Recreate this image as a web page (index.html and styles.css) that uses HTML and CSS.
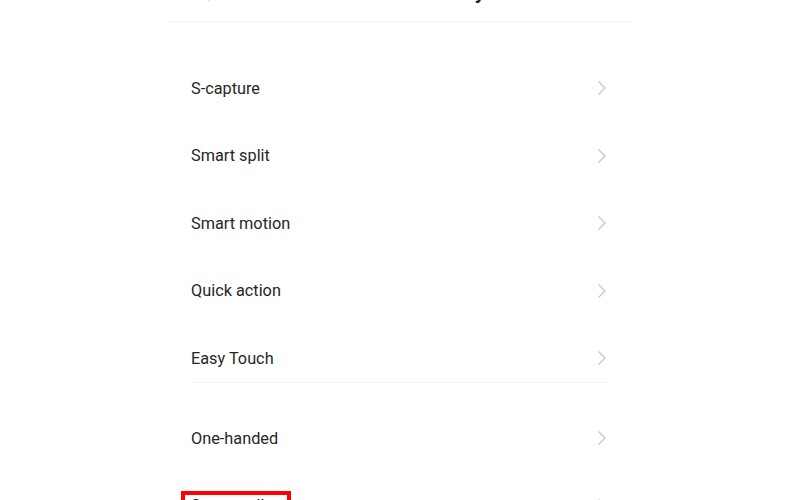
FILE: index.html
```html
<!DOCTYPE html>
<html lang="en">
<head>
    <meta charset="UTF-8">
    <meta name="viewport" content="width=device-width, initial-scale=1.0">
    <title>Shortcuts and accessibility</title>
    <link rel="stylesheet" href="styles.css">
</head>
<body>
    <div class="page">
        <header class="page-header">
            <h1 class="page-title">Quick and smart functionality</h1>
        </header>

        <main class="settings">
            <!-- First group -->
            <ul class="group group-first">
                <li class="row"><span class="row-label">S-capture</span><svg class="chevron" width="10" height="16" viewBox="0 0 10 16"><polyline points="1.5,1.5 8,8 1.5,14.5"/></svg></li>
                <li class="row"><span class="row-label">Smart split</span><svg class="chevron" width="10" height="16" viewBox="0 0 10 16"><polyline points="1.5,1.5 8,8 1.5,14.5"/></svg></li>
                <li class="row"><span class="row-label">Smart motion</span><svg class="chevron" width="10" height="16" viewBox="0 0 10 16"><polyline points="1.5,1.5 8,8 1.5,14.5"/></svg></li>
                <li class="row"><span class="row-label">Quick action</span><svg class="chevron" width="10" height="16" viewBox="0 0 10 16"><polyline points="1.5,1.5 8,8 1.5,14.5"/></svg></li>
                <li class="row"><span class="row-label">Easy Touch</span><svg class="chevron" width="10" height="16" viewBox="0 0 10 16"><polyline points="1.5,1.5 8,8 1.5,14.5"/></svg></li>
            </ul>

            <!-- Second group -->
            <ul class="group">
                <li class="row"><span class="row-label">One-handed</span><svg class="chevron" width="10" height="16" viewBox="0 0 10 16"><polyline points="1.5,1.5 8,8 1.5,14.5"/></svg></li>
                <li class="row"><span class="row-label row-marked">Smart call</span><svg class="chevron" width="10" height="16" viewBox="0 0 10 16"><polyline points="1.5,1.5 8,8 1.5,14.5"/></svg></li>
            </ul>
        </main>
    </div>
</body>
</html>
```

FILE: styles.css
```css
/* styles.css */

body {
    background-color: #fff;
    font-family: Roboto, 'Noto Sans', sans-serif;
    margin: 0;
    height: 500px;
    overflow: hidden;
}

.page {
    width: 464px;
    margin: 0 auto;
}

.page-header {
    display: flow-root;
    height: 21px;
    border-bottom: 1px solid #f4f4f4;
}

.page-title {
    margin: -23px 0 0 28px;
    font-size: 22px;
    line-height: 28px;
    font-weight: 500;
    color: #222;
    white-space: nowrap;
}

.settings {
    padding: 42px 24px 0 23px;
}

.group {
    list-style: none;
    margin: 0;
    padding: 0;
    display: flex;
    flex-direction: column;
    gap: 19.5px;
}

.group-first {
    border-bottom: 1px solid #f4f4f4;
    margin-bottom: 31px;
}

.row {
    height: 48px;
    display: flex;
    align-items: center;
    justify-content: space-between;
    font-size: 16.3px;
    color: #262626;
}

.row-label {
    position: relative;
}

/* Red highlight box around the marked item */
.row-marked::before {
    content: "";
    position: absolute;
    left: -10px;
    top: -5px;
    width: 102px;
    height: 40px;
    border: 4px solid #ff0000;
}

.chevron {
    margin-right: 1px;
    fill: none;
    stroke: #c8c8c8;
    stroke-width: 1.4;
}
```
